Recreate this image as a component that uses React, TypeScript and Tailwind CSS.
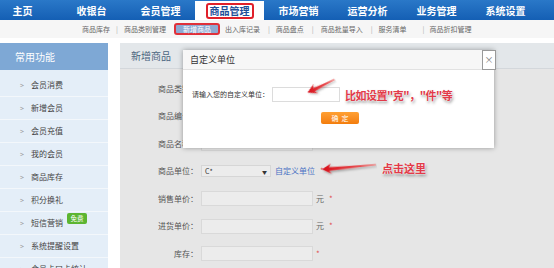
import React from "react";

const navItems = ["主页", "收银台", "会员管理", "商品管理", "市场营销", "运营分析", "业务管理", "系统设置"];
const sideItems = ["会员消费", "新增会员", "会员充值", "我的会员", "商品库存", "积分换礼", "短信营销", "系统提醒设置", "会员卡口卡统计"];

function RedArrow({ w, h, className }: { w: number; h: number; className?: string }) {
  return (
    <svg width={w} height={h} viewBox={`0 0 ${w} ${h}`} className={className}>
      <defs>
        <linearGradient id={`g${w}`} x1="0" x2="1" y1="0" y2="0">
          <stop offset="0" stopColor="#d8101a" />
          <stop offset="1" stopColor="#f06a6a" />
        </linearGradient>
        <filter id={`s${w}`} x="-20%" y="-50%" width="140%" height="200%">
          <feDropShadow dx="1" dy="1.5" stdDeviation="1" floodColor="#000" floodOpacity="0.35" />
        </filter>
      </defs>
      <polygon
        filter={`url(#s${w})`}
        fill={`url(#g${w})`}
        points={`1,${h / 2} 10,${h / 2 - 5} 8,${h / 2 - 1.5} ${w - 1},${h / 2 - 0.5} ${w - 1},${h / 2 + 0.5} 8,${h / 2 + 2} 10,${h / 2 + 5}`}
      />
    </svg>
  );
}

export default function App() {
  return (
    <div className="relative w-[554px] h-[268px] overflow-hidden bg-white font-['Noto_Sans_CJK_SC','Noto_Sans',sans-serif]">
      {/* top nav */}
      <div className="h-[20px] bg-gradient-to-b from-[#2a78c8] to-[#145fb4] flex items-end">
        <div className="flex -ml-[12px] h-[19px]">
          {navItems.map((t, i) => (
            <div
              key={t}
              className={
                i === 3
                  ? "w-[69px] h-[19px] bg-white flex items-center justify-center"
                  : "w-[69px] h-[19px] flex items-center justify-center text-white text-[10px] font-bold"
              }
            >
              {i === 3 ? (
                <span className="text-[10px] font-bold text-[#1d4f9a] border-2 border-[#e0202a] rounded-[3px] px-[2px] leading-[12px]">
                  {t}
                </span>
              ) : (
                t
              )}
            </div>
          ))}
        </div>
      </div>
      {/* sub nav */}
      <div className="h-[18px] bg-[#f6f6f6] flex items-center text-[7px] text-[#666] leading-none">
        <span className="ml-[82px]">商品库存</span>
        <span className="ml-[6px] text-[#aaa]">|</span>
        <span className="ml-[6px]">商品类别管理</span>
        <span className="ml-[8px] w-[46px] h-[12px] border-2 border-[#e0303a] rounded-[3px] bg-[#8eaad2] text-white flex items-center justify-center">
          新增商品
        </span>
        <span className="ml-[5px]">出入库记录</span>
        <span className="ml-[8px] text-[#aaa]">|</span>
        <span className="ml-[6px]">商品盘点</span>
        <span className="ml-[8px] text-[#aaa]">|</span>
        <span className="ml-[7px]">商品批量导入</span>
        <span className="ml-[8px] text-[#aaa]">|</span>
        <span className="ml-[6px]">服务清单</span>
        <span className="ml-[16px] text-[#aaa]">|</span>
        <span className="ml-[5px]">商品折扣管理</span>
      </div>
      {/* main */}
      <div className="flex mt-[5px] h-[230px]">
        {/* sidebar */}
        <div className="w-[108px] bg-[#e4eef8] flex flex-col">
          <div className="h-[27px] bg-[#7ea8d5] text-white text-[10px] flex items-center pl-[15px] shrink-0">常用功能</div>
          <div className="pt-[4px]">
            {sideItems.map((t) => (
              <div key={t} className="relative h-[23px] border-b border-[#f3f7fb] flex items-center text-[8px] text-[#444]">
                <span className="ml-[20px] text-[#999] text-[7px]">&gt;</span>
                <span className="ml-[7px]">{t}</span>
                {t === "短信营销" && (
                  <span className="absolute left-[67px] top-[1px] w-[20px] h-[11px] bg-[#5cb531] text-white text-[6.5px] leading-none rounded-[2px] flex items-center justify-center">
                    免费
                  </span>
                )}
              </div>
            ))}
          </div>
        </div>
        {/* content */}
        <div className="ml-[12px] flex-1 bg-[#e6e6e6] flex flex-col">
          <div className="h-[26px] bg-[#e3e7ea] border-b border-[#d3d7db] flex items-center pl-[11px] text-[10px] text-[#4a6580] shrink-0">
            新增商品
          </div>
          <div className="pt-[6px] text-[8px] text-[#555]">
            {[
              ["商品类别：", "input"],
              ["商品编号：", "input"],
              ["商品名称：", "input"],
              ["商品单位：", "select"],
              ["销售单价：", "yuan"],
              ["进货单价：", "yuan"],
              ["库存：", "plain"],
            ].map(([label, kind]) => (
              <div key={label} className="h-[27.5px] flex items-center">
                <div className="w-[78px] text-right">{label}</div>
                <div className="ml-[3px] flex items-center">
                  {kind === "select" ? (
                    <>
                      <div className="w-[70px] h-[12px] bg-[#ececec] border border-[#d6d6d6] flex items-center justify-between px-[3px] text-[7px] text-[#333]">
                        <span>C*</span>
                        <span className="text-[5px]">▼</span>
                      </div>
                      <span className="ml-[4px] text-[#4a72c4] text-[8px]">自定义单位</span>
                      <span className="ml-[5px] text-[#e05050]">*</span>
                    </>
                  ) : (
                    <>
                      <div className="w-[112px] h-[15px] bg-[#ececec] border border-[#d9d9d9]" />
                      {kind === "yuan" && <span className="ml-[3px] text-[#666]">元</span>}
                      <span className={kind === "yuan" ? "ml-[5px] text-[#e05050]" : "ml-[3px] text-[#e05050]"}>*</span>
                    </>
                  )}
                </div>
              </div>
            ))}
          </div>
        </div>
      </div>

      {/* modal */}
      <div className="absolute left-[183px] top-[50px] w-[311px] h-[98px] bg-white shadow-[0_0_5px_rgba(0,0,0,0.35)] flex flex-col">
        <div className="h-[20px] bg-[#f7f7f7] border-b border-[#e2e2e2] flex items-center pl-[7px] text-[9px] text-[#333] shrink-0">
          自定义单位
        </div>
        <div className="flex items-center mt-[17px] pl-[9px] text-[7px] text-[#333]">
          <span>请输入您的自定义单位：</span>
          <div className="ml-[3px] w-[68px] h-[15px] border border-[#dcdcdc] bg-white" />
        </div>
        <div className="flex mt-[10px]">
          <div className="ml-[138px] w-[38px] h-[12px] rounded-[2px] bg-gradient-to-b from-[#ffa033] to-[#f37d0a] text-white text-[7px] flex items-center justify-center">
            确&nbsp;&nbsp;定
          </div>
        </div>
        <div className="absolute right-[-2px] top-0 w-[14px] h-[20px] border border-[#999] bg-white flex items-center justify-center text-[9px] text-[#777]">
          ×
        </div>
      </div>

      {/* annotations */}
      <RedArrow w={32} h={20} className="absolute left-[305px] top-[76px] rotate-[-26deg]" />
      <div className="absolute left-[345px] top-[90px] text-[11px] font-bold text-[#e23a48] leading-none tracking-[-0.5px] [text-shadow:0_0_2px_#fff,0_0_2px_#fff,1px_2px_3px_rgba(0,0,0,0.45)]">
        比如设置"克"，"件"等
      </div>
      <RedArrow w={56} h={14} className="absolute left-[321px] top-[160px] rotate-[-5deg]" />
      <div className="absolute left-[382px] top-[163px] text-[11px] font-bold text-[#e23a48] leading-none [text-shadow:0_0_2px_#fff,0_0_2px_#fff,1px_2px_3px_rgba(0,0,0,0.45)]">
        点击这里
      </div>
    </div>
  );
}
